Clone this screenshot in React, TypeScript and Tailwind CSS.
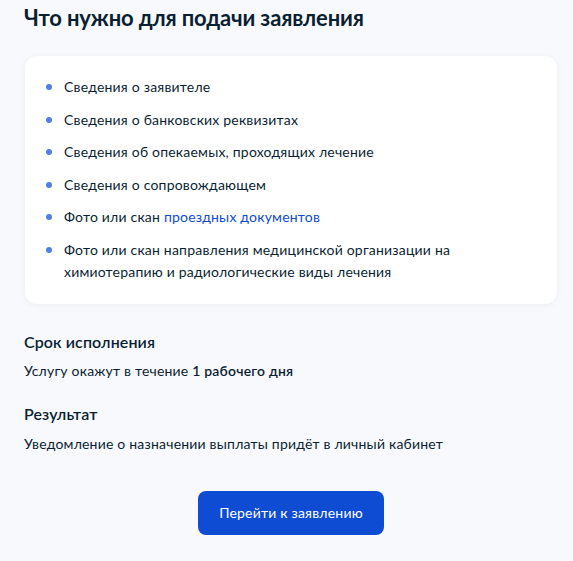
import React from "react";

const items: React.ReactNode[] = [
  "Сведения о заявителе",
  "Сведения о банковских реквизитах",
  "Сведения об опекаемых, проходящих лечение",
  "Сведения о сопровождающем",
  <>
    Фото или скан <span className="text-[#0d4cd3]">проездных документов</span>
  </>,
  "Фото или скан направления медицинской организации на химиотерапию и радиологические виды лечения",
];

export default function App() {
  return (
    <div
      className="min-h-[561px] w-[573px] bg-[#f8f9fc] pl-6 text-[#0b1f33]"
      style={{ fontFamily: "Lato, 'Noto Sans', sans-serif" }}
    >
      <h1 className="pt-[4px] text-[22px] font-bold leading-[28px] tracking-[-0.15px]">
        Что нужно для подачи заявления
      </h1>
      <div className="mt-[24px] ml-px w-[532px] rounded-[12px] bg-white px-5 pt-[20px] pb-[21px] shadow-[0_1px_6px_rgba(102,119,136,0.08)]">
        <ul className="flex flex-col gap-[10.5px]">
          {items.map((it, i) => (
            <li key={i} className="flex text-[14px] leading-[22px] tracking-[0.2px]">
              <span className="mt-[8px] mr-[12px] ml-[1px] h-[6px] w-[6px] shrink-0 rounded-full bg-[#4f7fe0]" />
              <span className="pr-[70px]">{it}</span>
            </li>
          ))}
        </ul>
      </div>
      <h2 className="mt-[26px] text-[16px] font-semibold leading-[24px] tracking-[0.1px]">Срок исполнения</h2>
      <p className="mt-[7px] text-[14px] leading-[20px] tracking-[0.2px]">
        Услугу окажут в течение <span className="font-semibold">1 рабочего дня</span>
      </p>
      <h2 className="mt-[21px] text-[16px] font-semibold leading-[24px] tracking-[0.1px]">Результат</h2>
      <p className="mt-[8px] text-[14px] leading-[20px] tracking-[0.2px]">
        Уведомление о назначении выплаты придёт в личный кабинет
      </p>
      <div className="mt-[37px] flex w-[534px] justify-center">
        <button className="h-[44px] w-[186px] rounded-[8px] bg-[#0d4cd3] text-[14px] tracking-[0.2px] text-white">
          Перейти к заявлению
        </button>
      </div>
    </div>
  );
}
